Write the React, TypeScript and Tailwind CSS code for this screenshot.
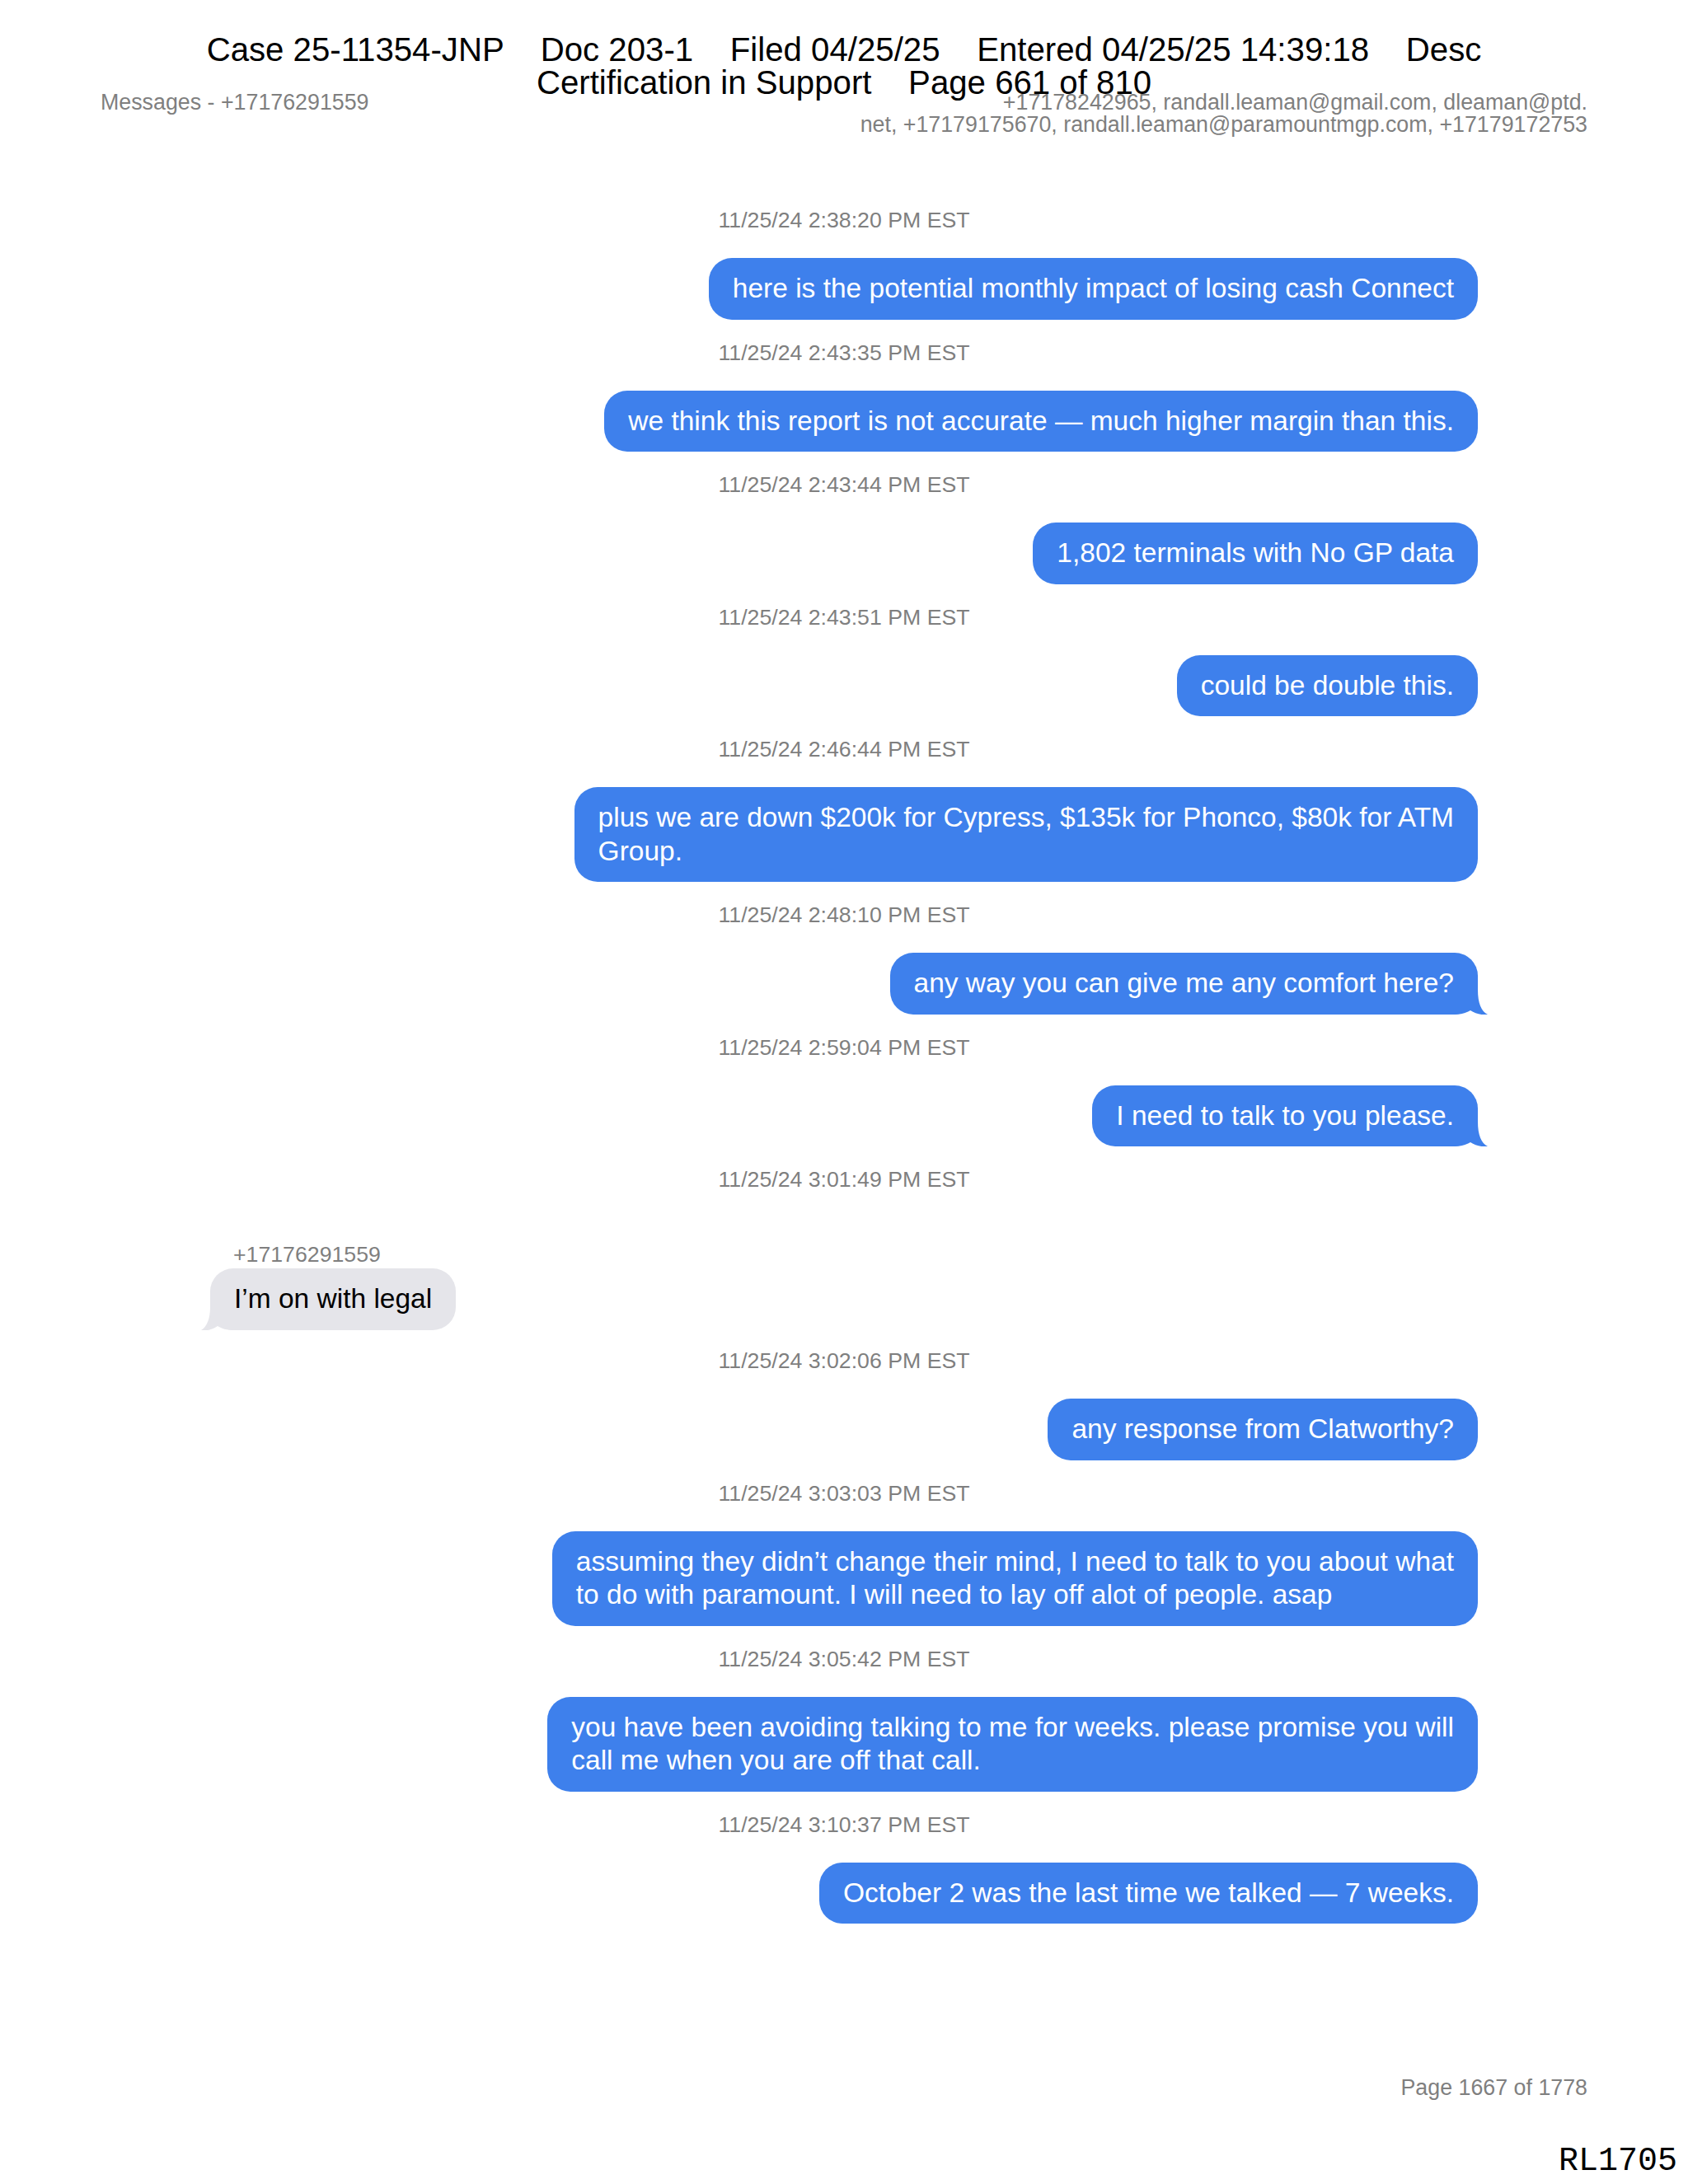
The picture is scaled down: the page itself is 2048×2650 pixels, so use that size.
type Message = {
  time: string
  lines: string[]
  from?: string
  tail?: boolean
}

const messages: Message[] = [
  { time: '11/25/24 2:38:20 PM EST', lines: ['here is the potential monthly impact of losing cash Connect'] },
  { time: '11/25/24 2:43:35 PM EST', lines: ['we think this report is not accurate — much higher margin than this.'] },
  { time: '11/25/24 2:43:44 PM EST', lines: ['1,802 terminals with No GP data'] },
  { time: '11/25/24 2:43:51 PM EST', lines: ['could be double this.'] },
  {
    time: '11/25/24 2:46:44 PM EST',
    lines: ['plus we are down $200k for Cypress, $135k for Phonco, $80k for ATM', 'Group.'],
  },
  { time: '11/25/24 2:48:10 PM EST', lines: ['any way you can give me any comfort here?'], tail: true },
  { time: '11/25/24 2:59:04 PM EST', lines: ['I need to talk to you please.'], tail: true },
  { time: '11/25/24 3:01:49 PM EST', lines: ['I’m on with legal'], from: '+17176291559' },
  { time: '11/25/24 3:02:06 PM EST', lines: ['any response from Clatworthy?'] },
  {
    time: '11/25/24 3:03:03 PM EST',
    lines: [
      'assuming they didn’t change their mind, I need to talk to you about what',
      'to do with paramount. I will need to lay off alot of people. asap',
    ],
  },
  {
    time: '11/25/24 3:05:42 PM EST',
    lines: ['you have been avoiding talking to me for weeks. please promise you will', 'call me when you are off that call.'],
  },
  { time: '11/25/24 3:10:37 PM EST', lines: ['October 2 was the last time we talked — 7 weeks.'] },
]

function SentTail() {
  return (
    <svg className="absolute right-[-14px] bottom-0 w-[44px] h-[32px]" viewBox="-30 -32 44 32">
      <path d="M0 -30 C0 -14 4 -4 12 0 C5 1 -3 -1 -9 -5 C-14 -2 -20 0 -30 0 L-30 -30 Z" fill="#3e80ec" />
    </svg>
  )
}

function ReceivedTail() {
  return (
    <svg className="absolute left-[-12px] bottom-0 w-[42px] h-[32px]" viewBox="-12 -32 42 32">
      <path d="M0 -28 C0 -14 -4 -4 -11 0 C-4 1 3 -1 9 -5 C14 -2 20 0 30 0 L30 -28 Z" fill="#e5e5ea" />
    </svg>
  )
}

function Timestamp({ time }: { time: string }) {
  return <div className="text-center text-[26.7px] leading-[30px] text-[#7f7f7f]">{time}</div>
}

function Bubble({ msg }: { msg: Message }) {
  const received = !!msg.from
  return (
    <div
      className={
        received
          ? 'relative w-fit rounded-[28px] bg-[#e5e5ea] px-[29px] py-[17px] text-[33.5px] leading-[40.5px] text-black whitespace-nowrap'
          : 'relative w-fit rounded-[28px] bg-[#3e80ec] px-[29px] py-[17px] text-[33.5px] leading-[40.5px] text-white whitespace-nowrap'
      }
    >
      {msg.lines.map((line, i) => (
        <div key={i} className="relative z-10">
          {line}
        </div>
      ))}
      {msg.tail && <SentTail />}
      {received && <ReceivedTail />}
    </div>
  )
}

export default function App() {
  return (
    <div className="relative flex h-[2650px] w-[2048px] flex-col bg-white font-['Liberation_Sans',Arial,sans-serif]">
      {/* court filing stamp, printed over the page */}
      <div className="absolute inset-x-0 top-[41px] z-20 text-center text-[40.2px] leading-[40px] whitespace-pre text-black">
        <div>{'Case 25-11354-JNP    Doc 203-1    Filed 04/25/25    Entered 04/25/25 14:39:18    Desc'}</div>
        <div>{'Certification in Support    Page 661 of 810'}</div>
      </div>

      <div className="flex flex-1 flex-col px-[122px] pt-[111px]">
        <div className="flex items-start justify-between text-[26.8px] leading-[27px] text-[#7f7f7f]">
          <div>Messages - +17176291559</div>
          <div className="text-right">
            <div>+17178242965, randall.leaman@gmail.com, dleaman@ptd.</div>
            <div>net, +17179175670, randall.leaman@paramountmgp.com, +17179172753</div>
          </div>
        </div>

        <div className="mt-[87px] flex flex-col px-[133px]">
          {messages.map((msg, i) => {
            const prevReceived = i > 0 && !!messages[i - 1].from
            const top = i === 0 ? 'mt-0' : prevReceived ? 'mt-[22.5px]' : 'mt-[25px]'
            return (
              <div key={i} className={top}>
                <Timestamp time={msg.time} />
                {msg.from ? (
                  <div className="mt-[61px] flex flex-col items-start">
                    <div className="pl-[28px] text-[26.7px] leading-[30px] text-[#7f7f7f]">{msg.from}</div>
                    <div className="mt-[2px]">
                      <Bubble msg={msg} />
                    </div>
                  </div>
                ) : (
                  <div className="mt-[31px] flex justify-end">
                    <Bubble msg={msg} />
                  </div>
                )}
              </div>
            )
          })}
        </div>

        <div className="mt-auto text-right text-[26.8px] leading-[30px] text-[#7f7f7f]">Page 1667 of 1778</div>
      </div>

      <div className="mt-[55px] pr-[13px] pb-[7px] text-right font-['Liberation_Mono',monospace] text-[40px] leading-[40px] text-black">
        RL1705
      </div>
    </div>
  )
}
